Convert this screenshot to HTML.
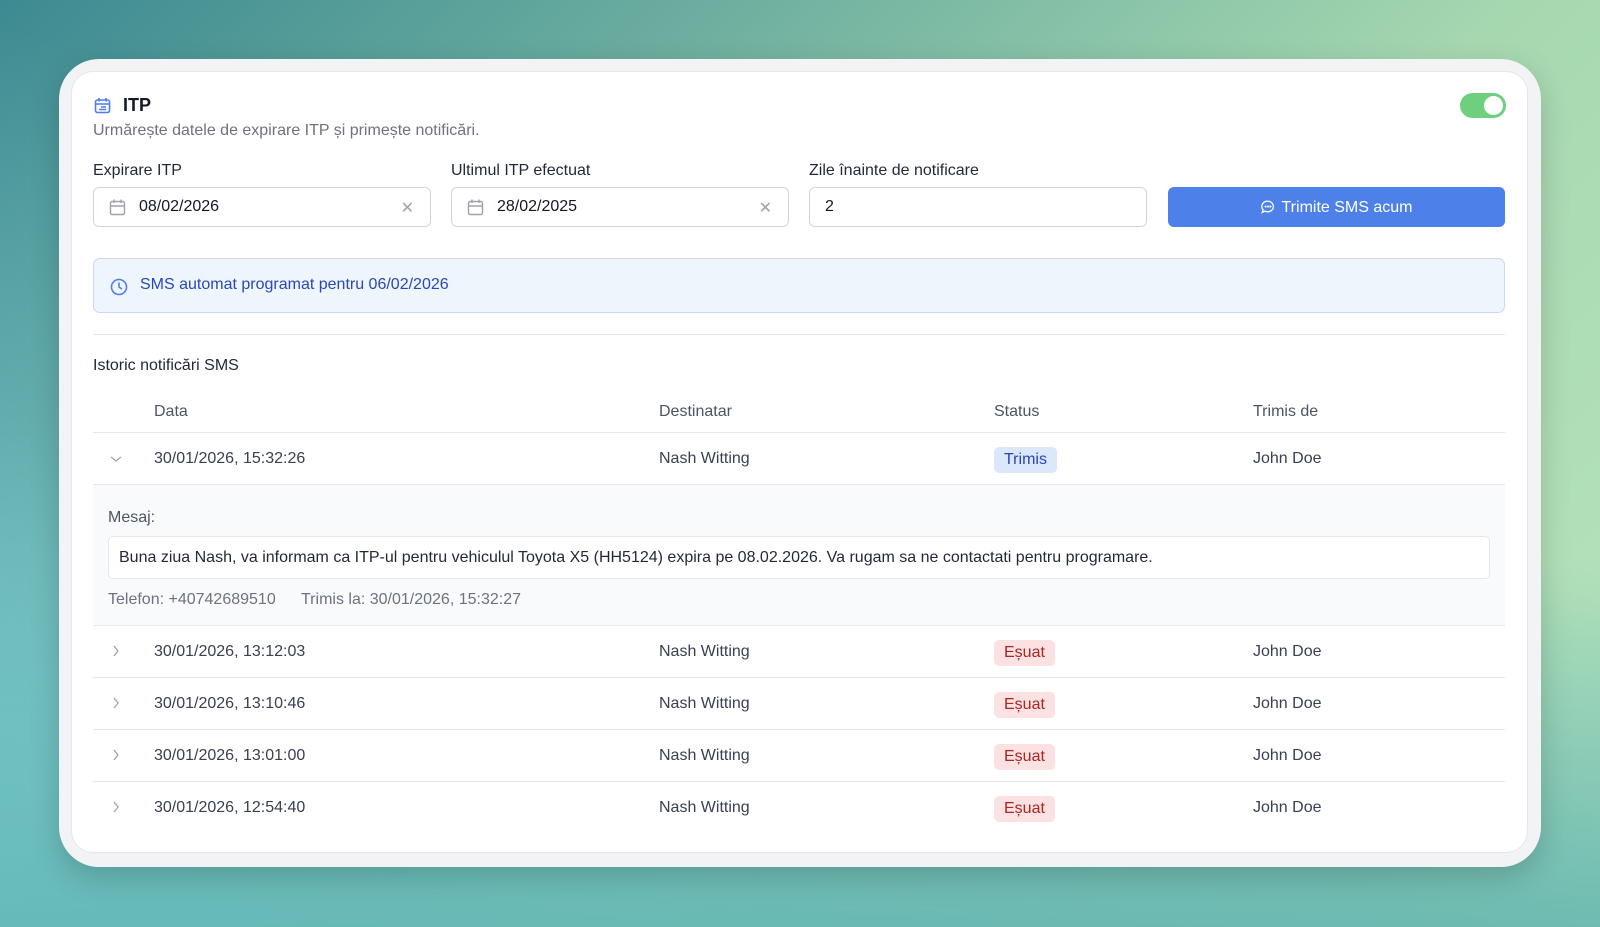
<!DOCTYPE html>
<html><head><meta charset="utf-8"><style>
*{box-sizing:border-box;margin:0;padding:0}
body{width:1600px;height:927px;overflow:hidden;font-family:"Liberation Sans",sans-serif;color:#374151;position:relative;
background:linear-gradient(135deg,#3d8a92 0%,#6fb0a0 30%,#a6d8b0 60%,#b9e6bd 100%);}
.bg2{position:absolute;inset:0;background:linear-gradient(20deg,rgba(130,215,225,0.9) 0%,rgba(110,190,200,0.4) 35%,rgba(100,180,170,0) 60%);}
.bg3{position:absolute;inset:0;background:linear-gradient(0deg,rgba(90,175,170,0.7) 0%,rgba(90,175,170,0) 40%);}
.frame{position:absolute;left:59px;top:59px;width:1482px;height:808px;background:#f1f3f5;border-radius:40px;box-shadow:0 10px 30px rgba(0,0,0,0.18)}
.card{position:absolute;left:71px;top:71px;width:1457px;height:782px;background:#fff;border-radius:22px;border:1px solid #e5e7eb}
.a{position:absolute;white-space:nowrap}
.lbl{font-size:16px;color:#1f2937}
.inp{position:absolute;top:187px;height:40px;border:1px solid #d1d5db;border-radius:6px;background:#fff;font-size:16px;color:#111827}
.inp span{position:absolute;left:45px;top:10px}
.inp .x{position:absolute;right:16px;top:10px;color:#9ca3af;font-size:16px}
.inp svg{position:absolute;left:15px;top:11px}
.t{font-size:16px;color:#374151}
.line{position:absolute;left:93px;width:1412px;height:1px;background:#e5e7eb}
.badge{position:absolute;height:26px;border-radius:5px;font-size:16px;padding:4px 10px 0}
.tr{background:#dbe7fb;color:#2844c0}
.es{background:#fbe1e1;color:#a82626}
.chev{position:absolute;left:110px}
</style></head><body>
<div class="bg2"></div>
<div class="bg3"></div>
<div class="frame"></div>
<div class="card"></div>
<svg class="a" style="left:94px;top:97px" width="17" height="17" viewBox="0 0 17 17" fill="none" stroke="#4f7fe8" stroke-width="1.6"><rect x="1.5" y="3" width="14" height="12.5" rx="2"/><path d="M1.5 7h14M5 1v3.5M12 1v3.5"/><path d="M5 12.5h7M7 10h5" stroke-width="1.4"/></svg>
<div class="a" style="left:123px;top:95px;font-size:18px;font-weight:bold;color:#111827">ITP</div>
<div class="a" style="left:93px;top:122px;font-size:16px;color:#6b7280">Urmărește datele de expirare ITP și primește notificări.</div>
<div style="position:absolute;left:1460px;top:93px;width:46px;height:25px;border-radius:13px;background:#6dd07f"><div style="position:absolute;right:3px;top:3px;width:19px;height:19px;border-radius:50%;background:#fff"></div></div>

<div class="a lbl" style="left:93px;top:162px">Expirare ITP</div>
<div class="a lbl" style="left:451px;top:162px">Ultimul ITP efectuat</div>
<div class="a lbl" style="left:809px;top:162px">Zile înainte de notificare</div>

<div class="inp" style="left:93px;width:338px"><svg width="17" height="17" viewBox="0 0 17 17" fill="none" stroke="#9ca3af" stroke-width="1.4"><rect x="1.5" y="2.5" width="14" height="13" rx="1.5"/><path d="M1.5 7h14M5 0.5v3.5M12 0.5v3.5"/></svg><span>08/02/2026</span><div class="x">✕</div></div>
<div class="inp" style="left:451px;width:338px"><svg width="17" height="17" viewBox="0 0 17 17" fill="none" stroke="#9ca3af" stroke-width="1.4"><rect x="1.5" y="2.5" width="14" height="13" rx="1.5"/><path d="M1.5 7h14M5 0.5v3.5M12 0.5v3.5"/></svg><span>28/02/2025</span><div class="x">✕</div></div>
<div class="inp" style="left:809px;width:338px"><span style="left:15px">2</span></div>
<div style="position:absolute;left:1168px;top:187px;width:337px;height:40px;border-radius:6px;background:#4e80ea;color:#fff;font-size:16px;text-align:center;line-height:41px">
<svg style="vertical-align:-2px;margin-right:7px" width="14" height="14" viewBox="0 0 14 14" fill="none" stroke="#fff" stroke-width="1.3"><path d="M7 1.2a5.6 5.3 0 1 1-3 9.9L1.2 12.5l0.9-2.7A5.6 5.3 0 0 1 7 1.2z"/><circle cx="4.6" cy="6.6" r=".4" fill="#fff"/><circle cx="7" cy="6.6" r=".4" fill="#fff"/><circle cx="9.4" cy="6.6" r=".4" fill="#fff"/></svg>Trimite SMS acum</div>

<div style="position:absolute;left:93px;top:258px;width:1412px;height:55px;border:1px solid #c9d9f3;border-radius:7px;background:#eff5fd"></div>
<svg class="a" style="left:110px;top:278px" width="18" height="18" viewBox="0 0 18 18" fill="none" stroke="#4f7fe8" stroke-width="1.6"><circle cx="9" cy="9" r="7.5"/><path d="M9 4.5V9l3 2"/></svg>
<div class="a" style="left:140px;top:276px;font-size:16px;color:#2848b8">SMS automat programat pentru 06/02/2026</div>

<div class="line" style="top:334px"></div>
<div class="a" style="left:93px;top:357px;font-size:16px;color:#1f2937">Istoric notificări SMS</div>

<div class="a t" style="left:154px;top:403px;color:#4b5563">Data</div>
<div class="a t" style="left:659px;top:403px;color:#4b5563">Destinatar</div>
<div class="a t" style="left:994px;top:403px;color:#4b5563">Status</div>
<div class="a t" style="left:1253px;top:403px;color:#4b5563">Trimis de</div>
<div class="line" style="top:432px"></div>

<svg class="chev" style="top:454px" width="12" height="10" viewBox="0 0 12 10" fill="none" stroke="#9ca3af" stroke-width="1.3"><path d="M1 3l5 4 5-4"/></svg>
<div class="a t" style="left:154px;top:450px">30/01/2026, 15:32:26</div>
<div class="a t" style="left:659px;top:450px">Nash Witting</div>
<div class="badge tr" style="left:994px;top:447px">Trimis</div>
<div class="a t" style="left:1253px;top:450px">John Doe</div>
<div class="line" style="top:484px"></div>

<div style="position:absolute;left:93px;top:485px;width:1412px;height:140px;background:#f9fafb"></div>
<div class="a" style="left:108px;top:509px;font-size:16px;color:#4b5563">Mesaj:</div>
<div style="position:absolute;left:108px;top:536px;width:1382px;height:43px;background:#fff;border:1px solid #e5e7eb;border-radius:5px"></div>
<div class="a" style="left:119px;top:549px;font-size:16px;color:#1f2937">Buna ziua Nash, va informam ca ITP-ul pentru vehiculul Toyota X5 (HH5124) expira pe 08.02.2026. Va rugam sa ne contactati pentru programare.</div>
<div class="a" style="left:108px;top:591px;font-size:16px;color:#6b7280">Telefon: +40742689510</div>
<div class="a" style="left:301px;top:591px;font-size:16px;color:#6b7280">Trimis la: 30/01/2026, 15:32:27</div>
<div class="line" style="top:625px"></div>

<svg class="chev" style="top:645px;left:112px" width="8" height="12" viewBox="0 0 8 12" fill="none" stroke="#9ca3af" stroke-width="1.3"><path d="M2 1l4 5-4 5"/></svg>
<div class="a t" style="left:154px;top:643px">30/01/2026, 13:12:03</div>
<div class="a t" style="left:659px;top:643px">Nash Witting</div>
<div class="badge es" style="left:994px;top:640px">Eșuat</div>
<div class="a t" style="left:1253px;top:643px">John Doe</div>
<div class="line" style="top:677px"></div>

<svg class="chev" style="top:697px;left:112px" width="8" height="12" viewBox="0 0 8 12" fill="none" stroke="#9ca3af" stroke-width="1.3"><path d="M2 1l4 5-4 5"/></svg>
<div class="a t" style="left:154px;top:695px">30/01/2026, 13:10:46</div>
<div class="a t" style="left:659px;top:695px">Nash Witting</div>
<div class="badge es" style="left:994px;top:692px">Eșuat</div>
<div class="a t" style="left:1253px;top:695px">John Doe</div>
<div class="line" style="top:729px"></div>

<svg class="chev" style="top:749px;left:112px" width="8" height="12" viewBox="0 0 8 12" fill="none" stroke="#9ca3af" stroke-width="1.3"><path d="M2 1l4 5-4 5"/></svg>
<div class="a t" style="left:154px;top:747px">30/01/2026, 13:01:00</div>
<div class="a t" style="left:659px;top:747px">Nash Witting</div>
<div class="badge es" style="left:994px;top:744px">Eșuat</div>
<div class="a t" style="left:1253px;top:747px">John Doe</div>
<div class="line" style="top:781px"></div>

<svg class="chev" style="top:801px;left:112px" width="8" height="12" viewBox="0 0 8 12" fill="none" stroke="#9ca3af" stroke-width="1.3"><path d="M2 1l4 5-4 5"/></svg>
<div class="a t" style="left:154px;top:799px">30/01/2026, 12:54:40</div>
<div class="a t" style="left:659px;top:799px">Nash Witting</div>
<div class="badge es" style="left:994px;top:796px">Eșuat</div>
<div class="a t" style="left:1253px;top:799px">John Doe</div>
</body></html>
